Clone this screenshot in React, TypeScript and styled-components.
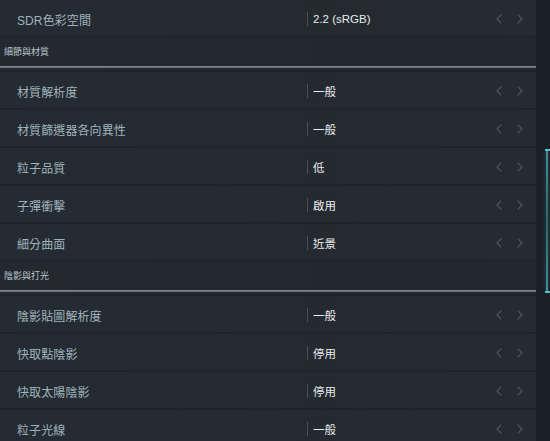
import { Fragment } from "react"
import styled, { createGlobalStyle } from "styled-components"

const GlobalStyle = createGlobalStyle`
    html, body {
        margin: 0;
        padding: 0;
        background: #1f242a;
        overflow: hidden;
    }
`

const FONT = `"Liberation Sans", "Noto Sans CJK TC", sans-serif`

type Item = { label: string; value: string }
type Section = { title?: string; items: Item[] }

const sections: Section[] = [
  { items: [{ label: "SDR色彩空間", value: "2.2 (sRGB)" }] },
  {
    title: "細節與材質",
    items: [
      { label: "材質解析度", value: "一般" },
      { label: "材質篩選器各向異性", value: "一般" },
      { label: "粒子品質", value: "低" },
      { label: "子彈衝擊", value: "啟用" },
      { label: "細分曲面", value: "近景" },
    ],
  },
  {
    title: "陰影與打光",
    items: [
      { label: "陰影貼圖解析度", value: "一般" },
      { label: "快取點陰影", value: "停用" },
      { label: "快取太陽陰影", value: "停用" },
      { label: "粒子光線", value: "一般" },
    ],
  },
]

export const Screen = styled.div`
    display: flex;
    width: 550px;
    height: 441px;
    overflow: hidden;
    font-family: ${FONT};
    background: #1f242a;
`
export const List = styled.div`
    width: 536px;
    display: flex;
    flex-direction: column;
    gap: 2px;
`
export const Row = styled.div`
    flex-shrink: 0;
    height: 36px;
    display: grid;
    grid-template-columns: 307px 1fr auto;
    align-items: center;
    padding-top: 2px;
    box-sizing: border-box;
    background: linear-gradient(90deg, #252b32 0%, #242a30 60%, #252b31 100%);
`
export const Label = styled.span`
    padding-left: 17px;
    font-size: 12px;
    color: #a0b3bd;
    letter-spacing: 0.1px;
`
export const Value = styled.span`
    position: relative;
    padding-left: 6px;
    font-size: 11.5px;
    color: #e8ecee;

    &::before {
        content: "";
        position: absolute;
        left: 0;
        top: 50%;
        width: 1px;
        height: 14px;
        margin-top: -7px;
        background: #4a5259;
    }
`
export const Arrows = styled.div`
    display: flex;
    gap: 15px;
    padding-right: 13px;
    color: #4a5259;
`
export const Header = styled.div`
    flex-shrink: 0;
    height: 32px;
    display: flex;
    flex-direction: column;
    justify-content: flex-end;
    background: linear-gradient(90deg, #23292f 0%, #22282e 100%);
`
export const Title = styled.div`
    padding-left: 4px;
    font-size: 9px;
    line-height: 12px;
    color: #bcc4ca;
`
export const Rule = styled.div`
    margin-top: 8px;
    margin-bottom: 2px;
    height: 2px;
    background: linear-gradient(180deg, #87929a 0%, #59646c 100%);
`
export const Track = styled.div`
    flex: 1;
    display: flex;
    flex-direction: column;
    align-items: flex-start;
    padding-top: 149px;
    background: #1b2025;
`
export const Thumb = styled.div`
    width: 5px;
    height: 144px;
    margin-left: 9px;
    box-sizing: border-box;
    border-top: 2px solid #5cc3cc;
    border-bottom: 2px solid #5cc3cc;
    display: flex;
    padding-left: 1px;

    &::after {
        content: "";
        width: 2px;
        height: 100%;
        background: linear-gradient(180deg, #3f8e97, #2c6870 50%, #3f8e97);
        box-shadow: 0 0 4px rgba(70, 170, 180, 0.4);
    }
`

const Chevron = ({ dir }: { dir: "left" | "right" }) => (
  <svg width="6" height="10" viewBox="0 0 6 10" fill="none">
    <path
      d={dir === "left" ? "M5 1 L1 5 L5 9" : "M1 1 L5 5 L1 9"}
      stroke="currentColor"
      strokeWidth="1.2"
      strokeLinecap="round"
      strokeLinejoin="round"
    />
  </svg>
)

const SettingRow = ({ label, value }: Item) => (
  <Row>
    <Label>{label}</Label>
    <Value>{value}</Value>
    <Arrows>
      <Chevron dir="left" />
      <Chevron dir="right" />
    </Arrows>
  </Row>
)

const App = () => {
  return (
    <Screen>
      <GlobalStyle />
      <List>
        {sections.map((section, i) => (
          <Fragment key={i}>
            {section.title && (
              <Header>
                <Title>{section.title}</Title>
                <Rule />
              </Header>
            )}
            {section.items.map((item) => (
              <SettingRow key={item.label} {...item} />
            ))}
          </Fragment>
        ))}
      </List>
      <Track>
        <Thumb />
      </Track>
    </Screen>
  )
}

export default App
